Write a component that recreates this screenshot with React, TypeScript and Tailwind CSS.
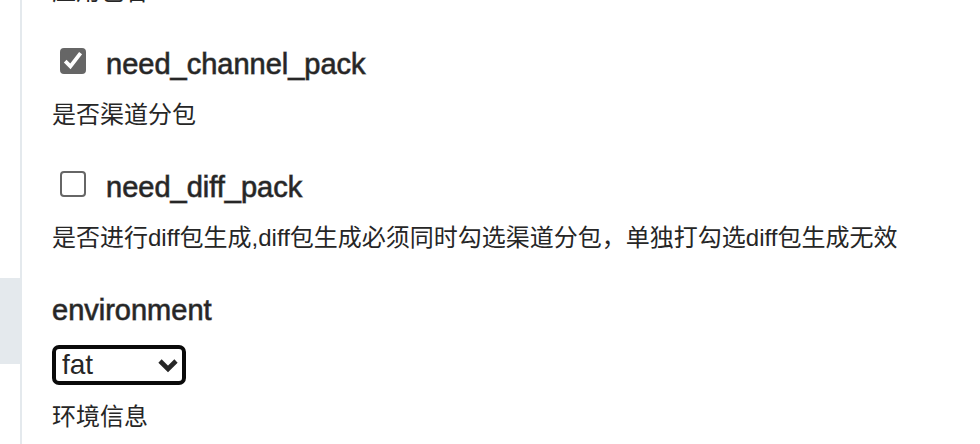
import { useId, useState } from "react";

type CheckFieldProps = {
  name: string;
  description: string;
  initial: boolean;
};

const labelClass = "text-[29px] leading-8 [-webkit-text-stroke:1px_#262626a6]";

function Description({ children }: { children: string }) {
  return <p className="text-2xl leading-8">{children}</p>;
}

function CheckField({ name, description, initial }: CheckFieldProps) {
  const id = useId();
  const [checked, setChecked] = useState(initial);
  return (
    <div className="flex flex-col gap-[19px]">
      <div className="flex items-start gap-5 pl-2">
        <span className="relative size-[26px] shrink-0">
          <input
            id={id}
            type="checkbox"
            checked={checked}
            onChange={(event) => setChecked(event.target.checked)}
            className="peer block size-full appearance-none rounded-[4px] border-2 border-[#666] bg-white checked:bg-[#666]"
          />
          <svg
            viewBox="0 0 26 26"
            className="pointer-events-none absolute inset-0 hidden size-full peer-checked:block"
            aria-hidden="true"
          >
            <path d="M5.2 13.2 L10.4 18.4 L20.6 5.2" fill="none" stroke="#fff" strokeWidth="3.8" />
          </svg>
        </span>
        <label htmlFor={id} className={labelClass}>
          {name}
        </label>
      </div>
      <Description>{description}</Description>
    </div>
  );
}

export default function App() {
  return (
    <div className="flex h-screen overflow-hidden bg-white font-['Liberation_Sans','Noto_Sans_CJK_SC',sans-serif] text-[#262626]">
      <aside className="w-[22px] shrink-0 border-r-2 border-[#e4e9ed] pt-[278px]">
        <div className="h-[86px] bg-[#e4e9ed]" />
      </aside>
      <main className="-mt-6 flex min-w-0 flex-1 flex-col gap-10 pl-[30px]">
        <Description>应用包名</Description>
        <CheckField name="need_channel_pack" description="是否渠道分包" initial={true} />
        <CheckField
          name="need_diff_pack"
          description="是否进行diff包生成,diff包生成必须同时勾选渠道分包，单独打勾选diff包生成无效"
          initial={false}
        />
        <div className="flex flex-col gap-[19px]">
          <label htmlFor="environment" className={labelClass}>
            environment
          </label>
          <div className="flex flex-col gap-4">
            <div className="relative w-[134px]">
              <select
                id="environment"
                className="block h-10 w-full appearance-none rounded-[7px] border-4 border-[#0a0a0a] bg-white pl-[6px] text-[28px] leading-8 outline-none"
              >
                <option>fat</option>
              </select>
              <svg
                viewBox="0 0 20 14"
                className="pointer-events-none absolute top-[14px] right-2 h-[14px] w-5"
                aria-hidden="true"
              >
                <path d="M2 2 L10 10 L18 2" fill="none" stroke="#262626" strokeWidth="4.6" />
              </svg>
            </div>
            <Description>环境信息</Description>
          </div>
        </div>
      </main>
    </div>
  );
}
